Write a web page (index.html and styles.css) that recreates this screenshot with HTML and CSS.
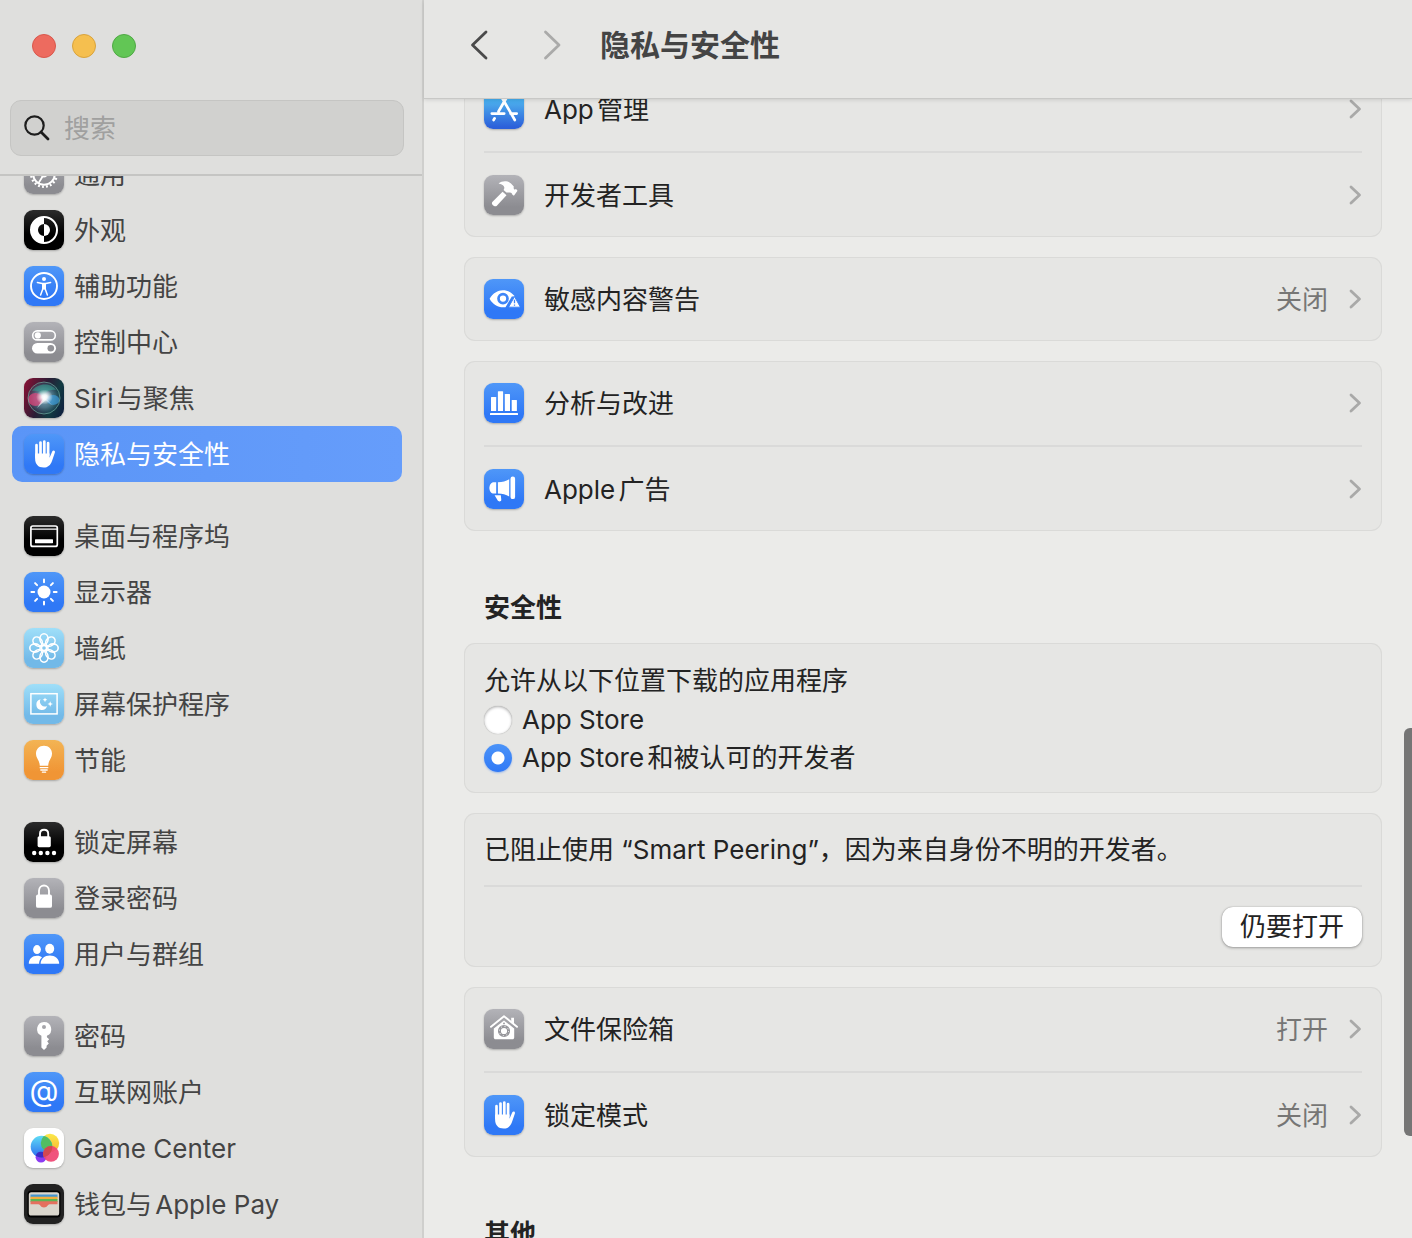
FILE: index.html
```html
<!DOCTYPE html>
<html lang="zh-CN">
<head>
  <meta charset="UTF-8" />
  <meta name="viewport" content="width=device-width, initial-scale=1.0"/>
  <title>隐私与安全性</title>
  <link rel="stylesheet" href="styles.css">
</head>
<body>
  <!-- Shared shapes -->
  <svg class="shapes" aria-hidden="true">
    <symbol id="hand" viewBox="0 0 40 40">
      <path d="M12.5 11.2v12M16.5 8.5v12M20.3 7.6v12M24.1 9.2v12" fill="none" stroke="#fff" stroke-width="2.7" stroke-linecap="round"/>
      <path d="M11.1 19.6h14.4v4.2l2.7-6.2c.8-1.8 3.2-1.1 2.7.8l-2.9 8.6c-1.5 4.2-4.1 6.6-8.3 6.6-5.6 0-8.6-3.4-8.6-9z" fill="#fff"/>
    </symbol>
    <symbol id="chevron" viewBox="0 0 14 20">
      <path d="M3 2l8.5 8L3 18" fill="none" stroke="currentColor" stroke-width="2.8" stroke-linecap="round" stroke-linejoin="round"/>
    </symbol>
  </svg>

  <div class="window">
    <!-- Sidebar -->
    <aside class="sidebar">
      <div class="sidebar-top">
        <div class="lights">
          <button class="light light-close" aria-label="关闭窗口"></button>
          <button class="light light-min" aria-label="最小化"></button>
          <button class="light light-zoom" aria-label="缩放"></button>
        </div>
        <label class="search">
          <svg width="28" height="28" viewBox="0 0 28 28" aria-hidden="true">
            <circle cx="11.500" cy="11.500" r="9.200" fill="none" stroke="#1d1d1d" stroke-width="2.200"/>
            <path d="M18 18l7 7" stroke="#1d1d1d" stroke-width="2.800" stroke-linecap="round"/>
          </svg>
          <input type="text" placeholder="搜索" aria-label="搜索">
        </label>
      </div>

      <nav class="list">
        <div class="group">
          <a class="item" href="#general">
            <svg class="icon gray" viewBox="0 0 40 40">
              <circle cx="20" cy="20" r="12.800" fill="none" stroke="#fff" stroke-width="2.400" stroke-dasharray="1.900 2.120"/>
              <circle cx="20" cy="20" r="10.800" fill="none" stroke="#fff" stroke-width="2"/>
              <circle cx="20" cy="20" r="2.600" fill="none" stroke="#fff" stroke-width="1.600"/>
              <path d="M22.600 20H31M18.700 22.200l-4.500 7.400M18.700 17.800l-4.500-7.400" stroke="#fff" stroke-width="1.800"/>
            </svg>
            <span>通用</span>
          </a>
          <a class="item" href="#appearance">
            <svg class="icon black" viewBox="0 0 40 40">
              <circle cx="20" cy="20" r="13" fill="none" stroke="#fff" stroke-width="2"/>
              <path d="M20 7a13 13 0 0 0 0 26v-7a6 6 0 0 1 0-12z" fill="#fff"/>
              <path d="M20 14a6 6 0 0 1 0 12z" fill="#fff"/>
            </svg>
            <span>外观</span>
          </a>
          <a class="item" href="#accessibility">
            <svg class="icon blue" viewBox="0 0 40 40">
              <circle cx="20" cy="20" r="13" fill="none" stroke="#fff" stroke-width="1.900"/>
              <circle cx="20" cy="13" r="2" fill="#fff"/>
              <path d="M13.400 16.600l4.800.9h3.600l4.800-.9M18.800 18v5l-2.200 6M21.200 18v5l2.200 6" fill="none" stroke="#fff" stroke-width="1.500" stroke-linecap="round" stroke-linejoin="round"/>
              <path d="M18 17.200h4v6.200h-4z" fill="#fff"/>
            </svg>
            <span>辅助功能</span>
          </a>
          <a class="item" href="#control-center">
            <svg class="icon gray" viewBox="0 0 40 40">
              <rect x="8.700" y="8.900" width="22.600" height="9" rx="4.500" fill="none" stroke="#fff" stroke-width="1.600"/>
              <circle cx="13.800" cy="13.400" r="3.100" fill="#fff"/>
              <rect x="8" y="21" width="24" height="10.600" rx="5.300" fill="#fff"/>
              <circle cx="26.800" cy="26.300" r="3.300" fill="#929297"/>
            </svg>
            <span>控制中心</span>
          </a>
          <a class="item" href="#siri">
            <svg class="icon" viewBox="0 0 40 40">
              <defs>
                <linearGradient id="siriBg" x1="0" y1=".3" x2="1" y2=".7">
                  <stop offset="0" stop-color="#7d1234"/><stop offset=".45" stop-color="#2a1c35"/><stop offset=".75" stop-color="#123b42"/><stop offset="1" stop-color="#10233f"/>
                </linearGradient>
                <radialGradient id="siriOrb">
                  <stop offset="0" stop-color="#8fb9cc"/><stop offset=".6" stop-color="#5d8da0" stop-opacity=".7"/><stop offset="1" stop-color="#2d5a6b" stop-opacity=".3"/>
                </radialGradient>
                <radialGradient id="siriGlow">
                  <stop offset="0" stop-color="#fff"/><stop offset=".3" stop-color="#fff" stop-opacity=".9"/><stop offset="1" stop-color="#fff" stop-opacity="0"/>
                </radialGradient>
              </defs>
              <rect width="40" height="40" fill="url(#siriBg)"/>
              <circle cx="20" cy="20" r="16" fill="url(#siriOrb)"/>
              <ellipse cx="11.500" cy="21.500" rx="7.500" ry="6.500" fill="#e5447c" opacity=".7"/>
              <ellipse cx="29" cy="22" rx="6.500" ry="5" fill="#3e9fe0" opacity=".65"/>
              <path d="M8 13c5-8 19-9 24-1-6-1-10 1-12 6-3-4-7-6-12-5z" fill="#37a596" opacity=".55"/>
              <circle cx="20" cy="20" r="16" fill="none" stroke="#79b9ac" stroke-width=".8" opacity=".8"/>
              <ellipse cx="20.500" cy="19" rx="8.500" ry="7.500" fill="url(#siriGlow)"/>
              <path d="M13 30l7-11 9 9-7-6z" fill="#fff" opacity=".6"/>
            </svg>
            <span>Siri与聚焦</span>
          </a>
          <a class="item active" href="#privacy" aria-current="page">
            <svg class="icon blue"><use href="#hand"/></svg>
            <span>隐私与安全性</span>
          </a>
        </div>

        <div class="group">
          <a class="item" href="#desktop">
            <svg class="icon black" viewBox="0 0 40 40">
              <rect x="6.900" y="10" width="26.400" height="20.400" rx="2" fill="none" stroke="#fff" stroke-width="1.700"/>
              <path d="M7 13.200h26" stroke="#fff" stroke-width="1.200"/>
              <rect x="11" y="23.200" width="18" height="4" rx=".6" fill="#fff"/>
            </svg>
            <span>桌面与程序坞</span>
          </a>
          <a class="item" href="#displays">
            <svg class="icon blue" viewBox="0 0 40 40">
              <circle cx="20" cy="20" r="6.500" fill="#fff"/>
              <path d="M20 7.400v2.800M20 29.800v2.800M7.400 20h2.800M29.800 20h2.800M11.100 11.100l2 2M26.900 26.900l2 2M11.100 28.900l2-2M26.900 13.100l2-2" stroke="#fff" stroke-width="2" stroke-linecap="round"/>
            </svg>
            <span>显示器</span>
          </a>
          <a class="item" href="#wallpaper">
            <svg class="icon sky" viewBox="0 0 40 40">
              <g fill="none" stroke="#fff" stroke-width="1.600">
                <ellipse cx="20" cy="11" rx="4.100" ry="5.200"/>
                <ellipse cx="20" cy="11" rx="4.100" ry="5.200" transform="rotate(45 20 20)"/>
                <ellipse cx="20" cy="11" rx="4.100" ry="5.200" transform="rotate(90 20 20)"/>
                <ellipse cx="20" cy="11" rx="4.100" ry="5.200" transform="rotate(135 20 20)"/>
                <ellipse cx="20" cy="11" rx="4.100" ry="5.200" transform="rotate(180 20 20)"/>
                <ellipse cx="20" cy="11" rx="4.100" ry="5.200" transform="rotate(225 20 20)"/>
                <ellipse cx="20" cy="11" rx="4.100" ry="5.200" transform="rotate(270 20 20)"/>
                <ellipse cx="20" cy="11" rx="4.100" ry="5.200" transform="rotate(315 20 20)"/>
                <circle cx="20" cy="20" r="2.600"/>
              </g>
            </svg>
            <span>墙纸</span>
          </a>
          <a class="item" href="#screensaver">
            <svg class="icon sky" viewBox="0 0 40 40">
              <rect x="6.900" y="9.700" width="26.200" height="20.200" fill="none" stroke="#fff" stroke-width="1.500"/>
              <path d="M16.600 15.300a5.400 5.400 0 1 0 6.400 6.600 4.800 4.800 0 0 1-6.400-6.600z" fill="#fff"/>
              <path d="M21 13.400l.7 1.700 1.700.7-1.700.7-.7 1.700-.7-1.700-1.700-.7 1.700-.7zM26.200 17.200l.8 2 2 .8-2 .8-.8 2-.8-2-2-.8 2-.8z" fill="#fff"/>
            </svg>
            <span>屏幕保护程序</span>
          </a>
          <a class="item" href="#energy">
            <svg class="icon orange" viewBox="0 0 40 40">
              <path d="M20 5.800c-4.800 0-8 3.400-8 7.800 0 5 3.600 6.600 3.800 12.200h8.400c.2-5.600 3.800-7.200 3.800-12.200 0-4.400-3.200-7.800-8-7.800z" fill="#fff"/>
              <path d="M16.200 27.700h7.600M16.800 30h6.400M18.400 32.200h3.200" stroke="#fff" stroke-width="1.300" stroke-linecap="round"/>
            </svg>
            <span>节能</span>
          </a>
        </div>

        <div class="group">
          <a class="item" href="#lock-screen">
            <svg class="icon black" viewBox="0 0 40 40">
              <rect x="13.600" y="14.200" width="13.200" height="11" rx="1.600" fill="#fff"/>
              <path d="M16 15v-3.200c0-5.400 8.200-5.400 8.200 0V15" fill="none" stroke="#fff" stroke-width="1.900"/>
              <g fill="#fff"><circle cx="10.200" cy="31" r="2.200"/><circle cx="16.800" cy="31" r="2.200"/><circle cx="23.400" cy="31" r="2.200"/><circle cx="30" cy="31" r="2.200"/></g>
            </svg>
            <span>锁定屏幕</span>
          </a>
          <a class="item" href="#login-password">
            <svg class="icon gray" viewBox="0 0 40 40">
              <rect x="12" y="16.600" width="16" height="13.200" rx="1.900" fill="#fff"/>
              <path d="M15 17v-4.200c0-7 10-7 10 0V17" fill="none" stroke="#fff" stroke-width="1.900"/>
            </svg>
            <span>登录密码</span>
          </a>
          <a class="item" href="#users">
            <svg class="icon blue" viewBox="0 0 40 40">
              <g fill="#fff">
                <ellipse cx="13" cy="15.600" rx="3.900" ry="4.500"/>
                <path d="M4.800 29.800c0-5 3.600-8 8.200-8 2.400 0 4 .6 5 1.600-2 1.600-2.900 3.800-2.900 6.400z"/>
                <ellipse cx="25.700" cy="14.800" rx="4.500" ry="5"/>
                <path d="M16.600 29.800c0-4.800 4-8.200 9.200-8.200s9.400 3.400 9.400 8.200z"/>
              </g>
            </svg>
            <span>用户与群组</span>
          </a>
        </div>

        <div class="group">
          <a class="item" href="#passwords">
            <svg class="icon gray" viewBox="0 0 40 40">
              <path fill-rule="evenodd" d="M20 6a7.200 7.200 0 0 1 2.900 13.800v1.400l2.300 2-2 2 1.600 2.200-2.200 2.400v1.600L20 34l-2.600-2.600V19.800A7.200 7.200 0 0 1 20 6zm0 3a2 2 0 1 0 0 4 2 2 0 0 0 0-4z" fill="#fff"/>
            </svg>
            <span>密码</span>
          </a>
          <a class="item" href="#accounts">
            <svg class="icon blue" viewBox="0 0 40 40">
              <text class="at" x="20" y="29" text-anchor="middle">@</text>
            </svg>
            <span>互联网账户</span>
          </a>
          <a class="item" href="#game-center">
            <svg class="icon white" viewBox="0 0 40 40">
              <defs>
                <linearGradient id="gcBlue" x1="0" y1="0" x2="0" y2="1"><stop offset="0" stop-color="#5fdcf5"/><stop offset="1" stop-color="#2b6df0"/></linearGradient>
                <linearGradient id="gcYellow" x1="0" y1="0" x2="0" y2="1"><stop offset="0" stop-color="#fbe94b"/><stop offset="1" stop-color="#f7b62e"/></linearGradient>
                <clipPath id="gcClip"><circle cx="17.500" cy="18.600" r="10.800"/></clipPath>
              </defs>
              <circle cx="17" cy="29.200" r="5.400" fill="#8a3bf2"/>
              <circle cx="26" cy="15" r="9.200" fill="url(#gcYellow)"/>
              <circle cx="17.500" cy="18.600" r="10.800" fill="url(#gcBlue)"/>
              <circle cx="26" cy="15" r="9.200" fill="#53bd62" clip-path="url(#gcClip)"/>
              <path d="M11.700 27.700a10.800 10.800 0 0 0 10.500.6 5.400 5.400 0 0 0-10.500-.6z" fill="#3d2bc4"/>
              <circle cx="27" cy="25.800" r="7.900" fill="#ef4573" opacity=".93"/>
              <circle cx="27" cy="25.800" r="7.900" fill="#d2484f" clip-path="url(#gcClip)"/>
            </svg>
            <span>Game Center</span>
          </a>
          <a class="item" href="#wallet">
            <svg class="icon dark" viewBox="0 0 40 40">
              <rect x="3.500" y="6.500" width="33" height="27" rx="3.500" fill="#000"/>
              <rect x="4.800" y="8.200" width="30.400" height="23.400" rx="2.600" fill="#dad6cd"/>
              <path d="M6.500 10.400h27v3h-27z" fill="#4596d0"/>
              <path d="M6.500 12.700h27v3h-27z" fill="#f1ae3c"/>
              <path d="M6.500 15h27v3h-27z" fill="#5cb555"/>
              <path d="M6.500 17.200h27v3h-8c-1.600 0-2 3.200-5.500 3.200s-3.900-3.200-5.500-3.200h-8z" fill="#e5705f"/>
            </svg>
            <span>钱包与Apple Pay</span>
          </a>
        </div>
      </nav>
    </aside>

    <!-- Detail pane -->
    <main class="main">
      <header class="toolbar">
        <button class="nav-btn" aria-label="后退">
          <svg width="36" height="36" viewBox="0 0 36 36"><path d="M25 5L11.500 18 25 31" fill="none" stroke="#4a4a4a" stroke-width="2.800" stroke-linecap="round" stroke-linejoin="round"/></svg>
        </button>
        <button class="nav-btn" aria-label="前进">
          <svg width="36" height="36" viewBox="0 0 36 36"><path d="M11.500 5L25 18 11.500 31" fill="none" stroke="#aaaaa9" stroke-width="2.800" stroke-linecap="round" stroke-linejoin="round"/></svg>
        </button>
        <h1>隐私与安全性</h1>
      </header>

      <div class="content">
        <div class="card">
          <a class="row" href="#app-management">
            <svg class="icon store" viewBox="0 0 40 40">
              <path d="M23.200 7.500L14.500 22.500M17.300 7.500L30.800 31M10.600 29.300l-1 1.700M7.800 24.600h12.400M26.500 24.600h6.200" fill="none" stroke="#fff" stroke-width="2.700" stroke-linecap="round"/>
            </svg>
            <span class="label">App管理</span>
            <svg class="chevron"><use href="#chevron"/></svg>
          </a>
          <a class="row" href="#developer-tools">
            <svg class="icon gray" viewBox="0 0 40 40">
              <path d="M14.600 8.400C18 5.600 23.800 5.400 27 8.600l2.800 3c-.4 1.500.1 2.900 1 3l1.300-.5 1.400 1.600-3.600 5-1.900-1.400c0-1.200-1-2-2.400-1.800h-3.200l-2.800-2.600c1.800-2.700.5-5.600-5-6.500z" fill="#fff"/>
              <path d="M18.600 16.800l3.900 3.500L12.600 30.900c-1.900 1.700-6-1.600-4.300-3.800z" fill="#fff"/>
            </svg>
            <span class="label">开发者工具</span>
            <svg class="chevron"><use href="#chevron"/></svg>
          </a>
        </div>

        <div class="card">
          <a class="row" href="#sensitive-content">
            <svg class="icon blue" viewBox="0 0 40 40">
              <path d="M5.600 19.800C9 14.200 13.800 11.300 18.800 11.300c4.600 0 8.800 2 12 6l-3 .2-6.300 10.700c-6.900.9-12.700-2.400-15.900-8.400z" fill="#fff"/>
              <circle cx="19" cy="19.600" r="4.500" fill="#fff" stroke="#3f86f7" stroke-width="2.700"/>
              <path d="M30.500 17.600l5.400 9.600c.3.600 0 1-.6 1h-9.600c-.6 0-.9-.4-.6-1z" fill="#fff" stroke="#3f86f7" stroke-width="1"/>
              <path d="M30.500 20.800v3.400M30.500 25.400v1.400" stroke="#3f86f7" stroke-width="1.300"/>
            </svg>
            <span class="label">敏感内容警告</span>
            <span class="value">关闭</span>
            <svg class="chevron"><use href="#chevron"/></svg>
          </a>
        </div>

        <div class="card">
          <a class="row" href="#analytics">
            <svg class="icon blue" viewBox="0 0 40 40">
              <g fill="#fff">
                <rect x="7" y="14" width="5.200" height="14" rx=".6"/>
                <rect x="13.900" y="8.200" width="5.200" height="19.800" rx=".6"/>
                <rect x="20.800" y="11" width="5.200" height="17" rx=".6"/>
                <rect x="27.700" y="17" width="5.200" height="11" rx=".6"/>
                <rect x="6" y="30" width="28" height="2" rx=".5"/>
              </g>
            </svg>
            <span class="label">分析与改进</span>
            <svg class="chevron"><use href="#chevron"/></svg>
          </a>
          <a class="row" href="#apple-ads">
            <svg class="icon blue" viewBox="0 0 40 40">
              <g fill="#fff">
                <path d="M12.200 13.200v11.400H9.800c-2.600 0-4.400-2.600-4.400-5.700s1.800-5.700 4.400-5.700z"/>
                <path d="M13.900 13.200c4.600 0 8-1 11.300-3v17.400c-3.300-2-6.700-3-11.300-3z"/>
                <rect x="26.500" y="7.500" width="4.600" height="22.600" rx="2.200"/>
                <path d="M10.600 26.200h6.200l.5 4.600c.2 1.800-2.900 2.200-3.700.5z"/>
              </g>
            </svg>
            <span class="label">Apple广告</span>
            <svg class="chevron"><use href="#chevron"/></svg>
          </a>
        </div>

        <h2>安全性</h2>
        <fieldset class="card sources">
          <legend>允许从以下位置下载的应用程序</legend>
          <label class="choice"><input type="radio" name="source" value="store"><span>App Store</span></label>
          <label class="choice"><input type="radio" name="source" value="identified" checked><span>App Store和被认可的开发者</span></label>
        </fieldset>

        <div class="card">
          <p class="blocked">已阻止使用 “Smart Peering”，因为来自身份不明的开发者。</p>
          <div class="actions">
            <button class="open-btn">仍要打开</button>
          </div>
        </div>

        <div class="card">
          <a class="row" href="#filevault">
            <svg class="icon gray" viewBox="0 0 40 40">
              <path d="M7 17.800L20 7.200l13 10.600" fill="none" stroke="#fff" stroke-width="1.900" stroke-linecap="round" stroke-linejoin="round"/>
              <path d="M27.200 8.800h2.800v6l-2.800-2.200z" fill="#fff"/>
              <path d="M20 11.400l10.200 8.200v8.900c0 1.100-.7 1.800-1.800 1.800H11.600c-1.100 0-1.800-.7-1.800-1.800v-8.900z" fill="#fff"/>
              <circle cx="20" cy="22" r="4.600" fill="none" stroke="#97979c" stroke-width="3"/>
              <circle cx="20" cy="22" r="4.600" fill="none" stroke="#fff" stroke-width="1" stroke-dasharray="1 2.613"/>
              <circle cx="20" cy="14.400" r=".9" fill="#97979c"/>
            </svg>
            <span class="label">文件保险箱</span>
            <span class="value">打开</span>
            <svg class="chevron"><use href="#chevron"/></svg>
          </a>
          <a class="row" href="#lockdown">
            <svg class="icon blue"><use href="#hand"/></svg>
            <span class="label">锁定模式</span>
            <span class="value">关闭</span>
            <svg class="chevron"><use href="#chevron"/></svg>
          </a>
        </div>

        <h2>其他</h2>
      </div>
      <div class="scroll-thumb"></div>
    </main>
  </div>
</body>
</html>
```
FILE: styles.css
```css
* {
  box-sizing: border-box;
}

body {
  margin: 0;
  font-family: Inter, "Noto Sans CJK SC", sans-serif;
  font-size: 26px;
  line-height: 36px;
  text-autospace: normal;
  color: #232323;
  background: #ebebe9;
}

a {
  color: inherit;
  text-decoration: none;
}

button,
input {
  font: inherit;
  color: inherit;
}

.shapes {
  position: absolute;
  width: 0;
  height: 0;
}

.window {
  display: flex;
  height: 100vh;
  overflow: hidden;
}

/* Sidebar */
.sidebar {
  display: flex;
  flex-direction: column;
  flex: none;
  width: 424px;
  background: #dfdfdd;
  border-right: 2px solid #cfcfcd;
  color: #444444;
}

.sidebar-top {
  position: relative;
  z-index: 1;
  flex: none;
  padding: 34px 18px 18px 10px;
  background: #dfdfdd;
  border-bottom: 2px solid #c5c5c3;
}

.lights {
  display: flex;
  gap: 16px;
  padding-left: 22px;
  margin-bottom: 42px;
}

.light {
  width: 24px;
  height: 24px;
  padding: 0;
  border: 1px solid;
  border-radius: 50%;
}

.light-close {
  background: #ed6b5f;
  border-color: #d9574c;
}

.light-min {
  background: #f5bf4f;
  border-color: #d9a33c;
}

.light-zoom {
  background: #62c655;
  border-color: #4fa944;
}

.search {
  display: flex;
  align-items: center;
  gap: 13px;
  height: 56px;
  padding: 0 12px;
  background: #d1d1cf;
  border: 1px solid #c5c5c3;
  border-radius: 11px;
}

.search input {
  flex: 1;
  min-width: 0;
  padding: 2px 0 0;
  border: 0;
  outline: 0;
  background: none;
}

.search input::placeholder {
  color: #a0a09f;
  opacity: 1;
}

/* the list sits scrolled part way under the search box */
.list {
  margin-top: -30px;
  padding: 0 20px 0 12px;
}

.group {
  margin-bottom: 26px;
}

.item {
  display: flex;
  align-items: center;
  gap: 10px;
  height: 56px;
  padding: 0 12px;
  border-radius: 10px;
}

.item.active {
  color: #ffffff;
  background: linear-gradient(to right, #5a95f7, #669dfb);
}

.item span,
.label,
.value {
  padding-top: 2px;
}

/* Icon tiles */
.icon {
  flex: none;
  width: 40px;
  height: 40px;
  border-radius: 9px;
  box-shadow: 0 1px 2px rgba(0, 0, 0, 0.25);
}

.blue {
  background: linear-gradient(#4f97f8, #2f78f6 80%);
}

.gray {
  background: linear-gradient(#b3b3b8, #8c8c91 80%);
}

.black {
  background: linear-gradient(#2c2c2c, #000000 60%);
}

.dark {
  background: #222222;
}

.sky {
  background: linear-gradient(#9fdff9, #72b9e8 80%);
}

.orange {
  background: linear-gradient(#f3b454, #f09535 80%);
}

.white {
  background: #ffffff;
}

.store {
  background: linear-gradient(#3fc0f6, #48a3ea 40%, #2c60da 95%);
}

.at {
  font-size: 30px;
  fill: #ffffff;
}

/* Detail pane */
.main {
  position: relative;
  display: flex;
  flex: 1;
  flex-direction: column;
  min-width: 0;
}

.toolbar {
  position: relative;
  z-index: 1;
  display: flex;
  align-items: center;
  flex: none;
  height: 98px;
  padding: 0 37px 8px;
  background: #e6e6e4;
  box-shadow: 0 1px 0 #c8c8c6, 0 2px 4px rgba(0, 0, 0, 0.12);
}

.nav-btn {
  width: 36px;
  height: 36px;
  margin-right: 37px;
  padding: 0;
  border: 0;
  background: none;
}

.nav-btn:last-of-type {
  margin-right: 30px;
}

.nav-btn svg {
  display: block;
}

.toolbar h1 {
  margin: 0;
  font-size: 30px;
  font-weight: 600;
  color: #444444;
}

/* scrolled part way under the toolbar */
.content {
  margin-top: -31px;
  padding: 0 30px 0 40px;
}

.card {
  margin: 0 0 20px;
  padding: 0;
  border: 0;
  border-radius: 11px;
  background: #e6e6e4;
  box-shadow: inset 0 0 0 1px #dadad8;
}

.row {
  display: flex;
  align-items: center;
  gap: 20px;
  height: 84px;
  padding: 0 20px;
}

.row + .row {
  position: relative;
  margin-top: 2px;
}

/* divider between two rows */
.row + .row::before,
.actions::before {
  content: "";
  position: absolute;
  top: -2px;
  left: 20px;
  right: 20px;
  height: 2px;
  background: #dadad9;
}

.label {
  flex: 1;
}

.value {
  color: #767675;
}

.chevron {
  flex: none;
  width: 14px;
  height: 20px;
  color: #a9a9a8;
}

h2 {
  margin: -20px 0 0;
  padding: 60px 20px 18px;
  font-size: 26px;
  line-height: 34px;
  font-weight: 700;
}

.sources {
  padding: 18px 20px 16px;
}

.sources legend {
  float: left;
  width: 100%;
  padding: 0;
  line-height: 40px;
}

.choice {
  display: flex;
  clear: both;
  align-items: center;
  gap: 10px;
  height: 38px;
}

.choice input {
  appearance: none;
  width: 28px;
  height: 28px;
  margin: 0;
  border-radius: 50%;
  background: #ffffff;
  box-shadow: inset 0 1px 3px rgba(0, 0, 0, 0.3), 0 0 1px rgba(0, 0, 0, 0.3);
}

.choice input:checked {
  background: radial-gradient(circle, #ffffff 6px, transparent 7px), linear-gradient(#4b93f8, #3079f6);
  box-shadow: 0 1px 2px rgba(48, 121, 246, 0.4);
}

.blocked {
  margin: 0;
  padding: 19px 20px 17px;
}

.actions {
  position: relative;
  display: flex;
  justify-content: flex-end;
  margin-top: 2px;
  padding: 20px;
}

.open-btn {
  height: 40px;
  padding: 0 18px;
  border: 0;
  border-radius: 11px;
  background: #ffffff;
  box-shadow: 0 0 1px rgba(0, 0, 0, 0.4), 0 1px 3px rgba(0, 0, 0, 0.3);
}

.scroll-thumb {
  position: absolute;
  z-index: 2;
  top: 728px;
  right: 0;
  width: 8px;
  height: 408px;
  border-radius: 6px 0 0 6px;
  background: #757575;
}
```
